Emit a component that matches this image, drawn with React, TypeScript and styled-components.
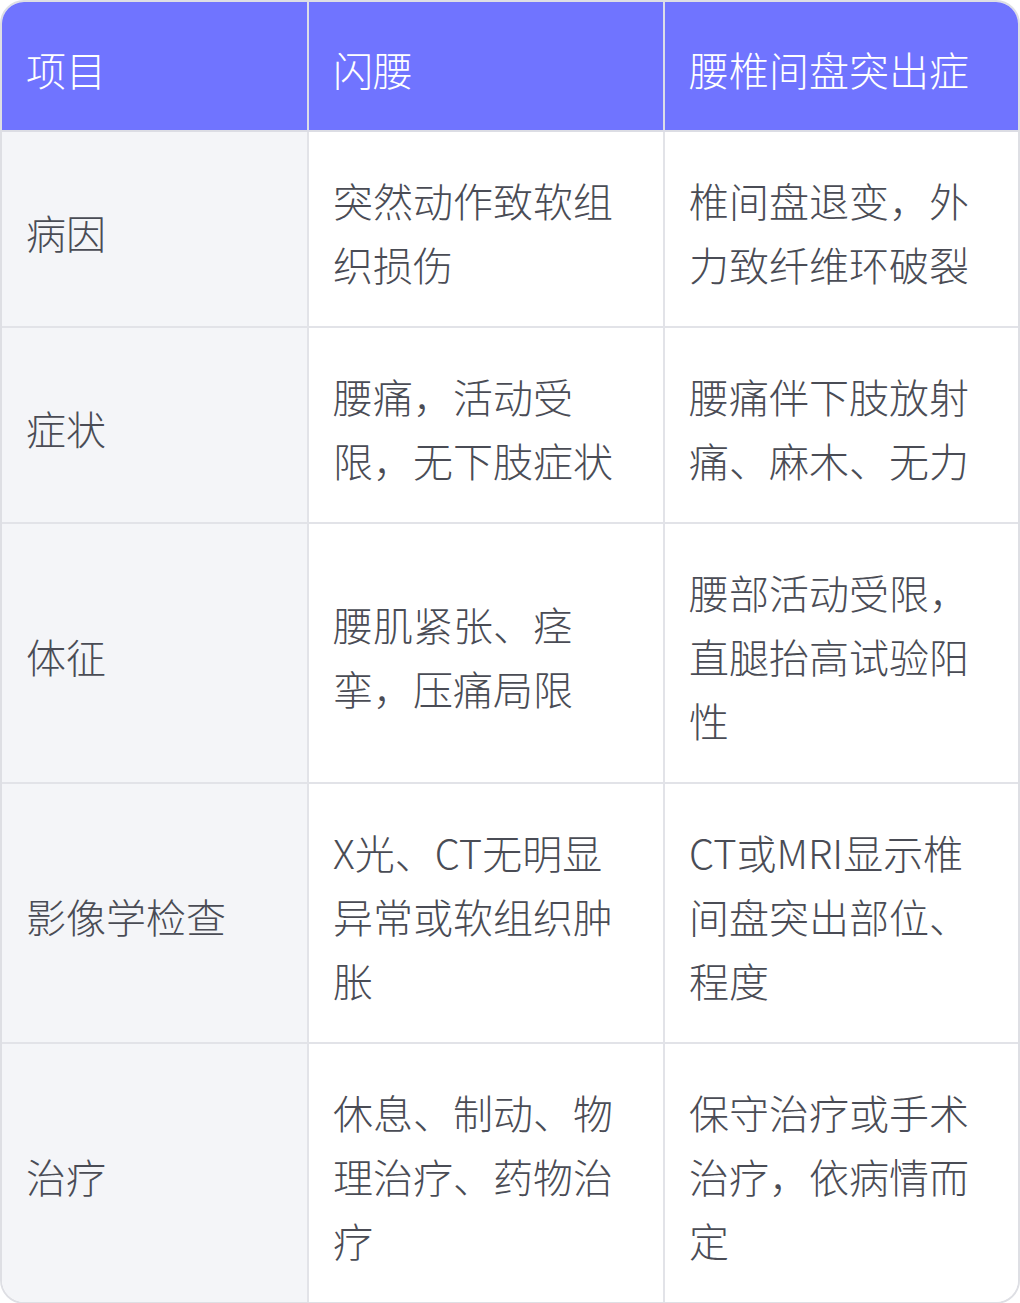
import * as React from "react";
import styled, { createGlobalStyle } from "styled-components";

const rows: [string, string, string][] = [
  ["病因", "突然动作致软组织损伤", "椎间盘退变，外力致纤维环破裂"],
  ["症状", "腰痛，活动受限，无下肢症状", "腰痛伴下肢放射痛、麻木、无力"],
  ["体征", "腰肌紧张、痉挛，压痛局限", "腰部活动受限，直腿抬高试验阳性"],
  ["影像学检查", "X光、CT无明显异常或软组织肿胀", "CT或MRI显示椎间盘突出部位、程度"],
  ["治疗", "休息、制动、物理治疗、药物治疗", "保守治疗或手术治疗，依病情而定"],
];

export default () => {
  return (
    <>
      <Global />
      <Wrapper>
        <Table>
          <colgroup>
            <col style={{ width: 307 }} />
            <col style={{ width: 356 }} />
            <col style={{ width: 353 }} />
          </colgroup>
          <thead>
            <tr>
              <Th>项目</Th>
              <Th>闪腰</Th>
              <Th>腰椎间盘突出症</Th>
            </tr>
          </thead>
          <tbody>
            {rows.map(([label, a, b]) => (
              <tr key={label}>
                <Td $label>{label}</Td>
                <Td>{a}</Td>
                <Td>{b}</Td>
              </tr>
            ))}
          </tbody>
        </Table>
      </Wrapper>
    </>
  );
};

const Global = createGlobalStyle`
  body {
    margin: 0;
    background: #ffffff;
    font-family: "Noto Sans CJK SC", "Noto Sans", sans-serif;
  }
`;

const Wrapper = styled.div`
  width: 1020px;
  box-sizing: border-box;
  border: 2px solid #dedfe4;
  border-radius: 24px;
  overflow: hidden;
`;

const Table = styled.table`
  width: 1016px;
  table-layout: fixed;
  border-collapse: separate;
  border-spacing: 0;
  font-size: 40px;
  font-weight: 300;
  line-height: 64px;
  color: #4a4c55;

  tr > *:last-child {
    border-right: none;
  }
  tbody tr:last-child > td {
    border-bottom: none;
  }
`;

const Th = styled.th`
  background: #7074ff;
  color: #ffffff;
  font-weight: 300;
  text-align: left;
  padding: 35px 24px 29px;
  border-right: 2px solid #dcdde8;
  border-bottom: 2px solid #dcdde4;
`;

const Td = styled.td<{ $label?: boolean }>`
  background: ${(p) => (p.$label ? "#f4f5f8" : "#ffffff")};
  vertical-align: middle;
  padding: 36px 24px 30px;
  border-right: 2px solid #e2e3e8;
  border-bottom: 2px solid #e2e3e8;
  word-break: break-all;
`;
